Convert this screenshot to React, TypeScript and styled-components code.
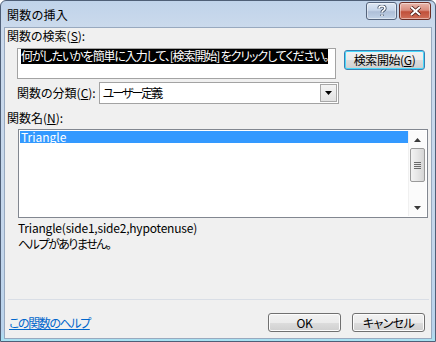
import * as React from 'react';
import styled, { createGlobalStyle } from 'styled-components';

const GlobalStyle = createGlobalStyle`
  html, body {
    margin: 0;
    padding: 0;
    background: #ffffff;
  }
  body {
    font-family: "Noto Sans CJK JP", "Noto Sans", sans-serif;
    font-size: 12px;
    font-feature-settings: "palt";
    color: #000;
  }
`;

const Window = styled.div`
  width: 436px;
  height: 342px;
  box-sizing: border-box;
  border: 1px solid #4f5f77;
  border-radius: 6px 6px 0 0;
  background: linear-gradient(#c0d3ea, #cbdaec 8%, #c4d6eb 70%, #b9d3ec 97%, #a6e2f2);
  display: flex;
  flex-direction: column;
  padding: 0 3px 2px 3px;
  overflow: hidden;
`;

const TitleBar = styled.div`
  height: 26px;
  display: flex;
  align-items: flex-start;
  padding-left: 3px;
`;

const TitleText = styled.div`
  flex: 1;
  line-height: 14px;
  margin-top: 7px;
  font-size: 12px;
  letter-spacing: 0.3px;
`;

const CaptionBtn = styled.div<{ $close?: boolean }>`
  width: ${(p) => (p.$close ? 32 : 31)}px;
  height: 18px;
  margin-top: 1px;
  margin-left: 2px;
  box-sizing: border-box;
  border: 1px solid ${(p) => (p.$close ? '#6b2e25' : '#55647c')};
  border-radius: 3px;
  background: ${(p) =>
    p.$close
      ? 'linear-gradient(#e9b7ac, #d98d7e 45%, #c0503a 55%, #d0705a)'
      : 'linear-gradient(#dde7f3, #c7d6ea 45%, #aebfd8 55%, #c2d3e8)'};
  box-shadow: inset 0 0 0 1px rgba(255, 255, 255, 0.45);
  display: flex;
  align-items: center;
  justify-content: center;
  &:last-child {
    margin-right: 1px;
  }
`;

const Client = styled.div`
  flex: 1;
  background: #f0f0f0;
  border: 1px solid #98a9bf;
  display: flex;
  flex-direction: column;
  padding: 0 6px 6px 2px;
`;

const Label = styled.div<{ $indent?: number }>`
  line-height: 14px;
  margin-left: ${(p) => p.$indent || 0}px;
  white-space: nowrap;
`;

const Narrow = styled.span<{ $ls: number }>`
  letter-spacing: ${(p) => p.$ls}px;
`;

const SearchRow = styled.div`
  display: flex;
  align-items: flex-start;
  margin-top: 5px;
  margin-left: 10px;
`;

const SearchBox = styled.div`
  width: 320px;
  height: 31px;
  box-sizing: border-box;
  background: #fff;
  border: 1px solid #a3a3a3;
  padding: 1px 3px;
  line-height: 12px;
  white-space: nowrap;
  overflow: hidden;
`;

const Selected = styled.span`
  background: #000;
  color: #fff;
  letter-spacing: -1.1px;
`;

const ButtonSlot = styled.div`
  margin-left: 8px;
  margin-top: 2px;
`;

const PushButton = styled.div<{ $default?: boolean; $w: number }>`
  width: ${(p) => p.$w}px;
  height: ${(p) => (p.$default ? 20 : 19)}px;
  box-sizing: border-box;
  border: 1px solid ${(p) => (p.$default ? '#3c7fb1' : '#707070')};
  border-radius: 3px;
  background: linear-gradient(#f2f2f2, #ebebeb 50%, #dddddd 51%, #cfcfcf);
  box-shadow: inset 0 0 0 1px ${(p) => (p.$default ? '#48d8fb' : '#fcfcfc')};
  display: flex;
  align-items: center;
  justify-content: center;
  line-height: 14px;
  letter-spacing: -0.4px;
  white-space: nowrap;
`;

const CategoryRow = styled.div`
  display: flex;
  align-items: center;
  margin-top: 3px;
  margin-left: 10px;
  gap: 3px;
`;

const Combo = styled.div`
  width: 240px;
  height: 22px;
  box-sizing: border-box;
  background: #fff;
  border: 1px solid #a3a3a3;
  display: flex;
  align-items: center;
  padding: 0 1px 0 3px;
`;

const ComboText = styled.div`
  flex: 1;
  line-height: 14px;
  letter-spacing: -2px;
`;

const ComboArrow = styled.div`
  width: 17px;
  height: 18px;
  box-sizing: border-box;
  border: 1px solid #a7a7a7;
  background: linear-gradient(#f4f4f4, #e2e2e2);
  display: flex;
  align-items: center;
  justify-content: center;
`;

const ListBox = styled.div`
  margin-top: 4px;
  margin-left: 11px;
  width: 410px;
  height: 89px;
  box-sizing: border-box;
  border: 1px solid #828790;
  background: #fff;
  padding: 1px;
  display: flex;
`;

const ListItems = styled.div`
  flex: 1;
`;

const ListItem = styled.div<{ $active?: boolean }>`
  height: 12px;
  line-height: 12px;
  padding-left: 1px;
  background: ${(p) => (p.$active ? '#3399ff' : 'transparent')};
  color: ${(p) => (p.$active ? '#fff' : '#000')};
`;

const ScrollBar = styled.div`
  width: 17px;
  background: #fbfbfb;
  border-left: 1px solid #f0f0f0;
  display: flex;
  flex-direction: column;
  align-items: center;
`;

const ScrollArrow = styled.div`
  height: 17px;
  width: 100%;
  display: flex;
  align-items: center;
  justify-content: center;
`;

const Thumb = styled.div`
  width: 15px;
  height: 34px;
  box-sizing: border-box;
  border: 1px solid #9a9a9a;
  border-radius: 2px;
  background: linear-gradient(90deg, #f3f3f3, #e6e6e6 50%, #d5d5d5);
  display: flex;
  align-items: center;
  justify-content: center;
`;

const InfoText = styled.div<{ $top?: number; $ls?: number }>`
  margin-left: 11px;
  margin-top: ${(p) => p.$top || 0}px;
  line-height: 16px;
  letter-spacing: ${(p) => p.$ls || 0}px;
`;

const Spacer = styled.div`
  flex: 1;
`;

const Separator = styled.div`
  height: 1px;
  margin-left: 1px;
  width: 421px;
  background: #d9dee6;
`;

const Footer = styled.div`
  display: flex;
  align-items: center;
  margin-top: 13px;
  margin-left: 2px;
  gap: 11px;
`;

const HelpLink = styled.a`
  flex: 1;
  color: #0066cc;
  text-decoration: underline;
  line-height: 14px;
  letter-spacing: -1.4px;
`;

const UpDown = ({ down }: { down?: boolean }) => (
  <svg width="7" height="4" viewBox="0 0 7 4">
    <path d={down ? 'M0 0h7L3.5 4z' : 'M3.5 0L7 4H0z'} fill="#3a3a3a" />
  </svg>
);

export default function App() {
  return (
    <>
      <GlobalStyle />
      <Window>
        <TitleBar>
          <TitleText>関数の挿入</TitleText>
          <CaptionBtn>
            <svg width="10" height="12" viewBox="0 0 10 12">
              <path
                d="M2 3.5C2 1.8 3.4 1 5 1s3 .9 3 2.4c0 2-3 2-3 4.1M5 9.5v1.5"
                fill="none"
                stroke="#3b4a60"
                strokeWidth="3.2"
              />
              <path
                d="M2 3.5C2 1.8 3.4 1 5 1s3 .9 3 2.4c0 2-3 2-3 4.1M5 9.5v1.5"
                fill="none"
                stroke="#fff"
                strokeWidth="1.6"
              />
            </svg>
          </CaptionBtn>
          <CaptionBtn $close>
            <svg width="13" height="10" viewBox="0 0 13 10">
              <path d="M2 1l9 8M11 1L2 9" stroke="#4a1a14" strokeWidth="3.6" />
              <path d="M2 1l9 8M11 1L2 9" stroke="#fff" strokeWidth="2" />
            </svg>
          </CaptionBtn>
        </TitleBar>
        <Client>
          <Label style={{ marginTop: 1 }}>
            関数の検索(<u>S</u>):
          </Label>
          <SearchRow>
            <SearchBox>
              <Selected>何がしたいかを簡単に入力して、[検索開始] をクリックしてください。</Selected>
            </SearchBox>
            <ButtonSlot>
              <PushButton $default $w={81}>
                検索開始(<u>G</u>)
              </PushButton>
            </ButtonSlot>
          </SearchRow>
          <CategoryRow>
            <Label>
              関数の分類(<u>C</u>):
            </Label>
            <Combo>
              <ComboText>ユーザー定義</ComboText>
              <ComboArrow>
                <svg width="7" height="4" viewBox="0 0 7 4">
                  <path d="M0 0h7L3.5 4z" fill="#000" />
                </svg>
              </ComboArrow>
            </Combo>
          </CategoryRow>
          <Label style={{ marginTop: 7 }}>
            関数名(<u>N</u>):
          </Label>
          <ListBox>
            <ListItems>
              <ListItem $active>Triangle</ListItem>
            </ListItems>
            <ScrollBar>
              <ScrollArrow>
                <UpDown />
              </ScrollArrow>
              <Thumb>
                <svg width="7" height="7" viewBox="0 0 7 7">
                  <path d="M0 .5h7M0 2.5h7M0 4.5h7M0 6.5h7" stroke="#6a6a6a" />
                </svg>
              </Thumb>
              <Spacer />
              <ScrollArrow>
                <UpDown down />
              </ScrollArrow>
            </ScrollBar>
          </ListBox>
          <InfoText $top={2} $ls={-0.2}>
            Triangle(side1,side2,hypotenuse)
          </InfoText>
          <InfoText $ls={-1.5}>ヘルプがありません。</InfoText>
          <Spacer />
          <Separator />
          <Footer>
            <HelpLink>この関数のヘルプ</HelpLink>
            <PushButton $w={73}>OK</PushButton>
            <PushButton $w={73}>
              <Narrow $ls={-0.6}>キャンセル</Narrow>
            </PushButton>
          </Footer>
        </Client>
      </Window>
    </>
  );
}
